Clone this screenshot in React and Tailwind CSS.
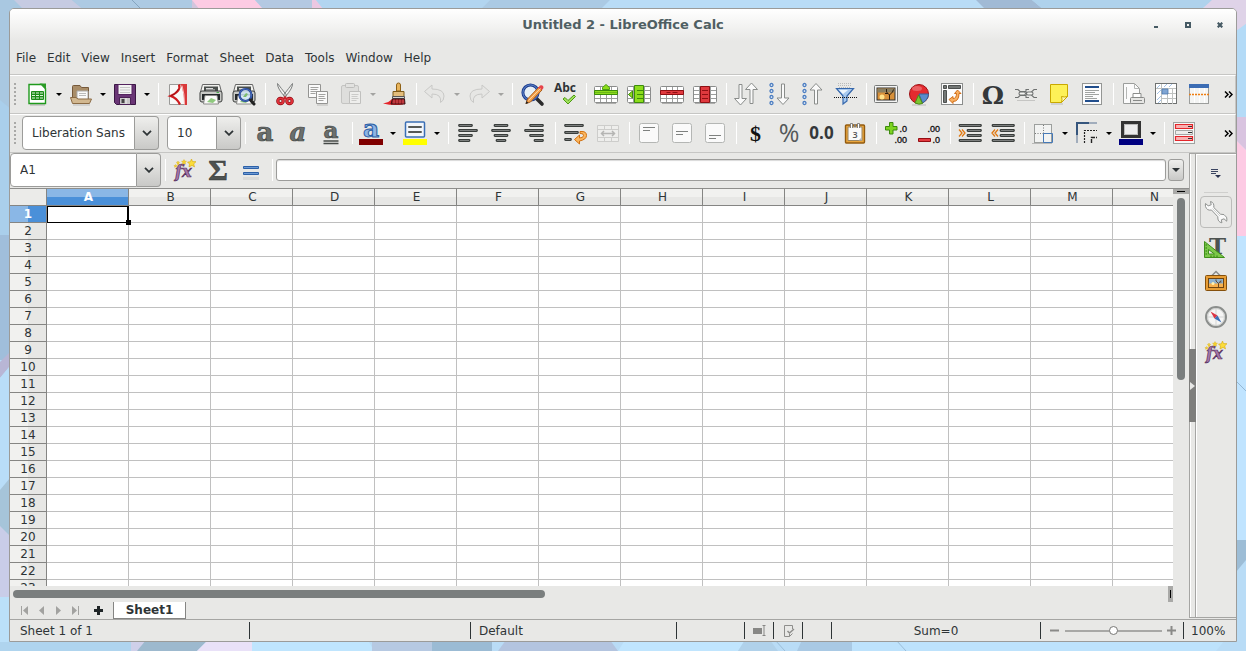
import React from "react";

const MENUS = ["File", "Edit", "View", "Insert", "Format", "Sheet", "Data", "Tools", "Window", "Help"];
const COLUMNS = "ABCDEFGHIJKLMN".split("");
const ROWS = Array.from({ length: 23 }, (_, i) => i + 1);

/* ---------- Desktop ---------- */

function Wallpaper() {
  return (
    <svg className="absolute inset-0 h-full w-full" viewBox="0 0 1246 651" preserveAspectRatio="none" aria-hidden="true">
      <rect width="1246" height="651" fill="#b9dcf6" />
      <path d="M0 0H200V240H0z" fill="#a9c8e1" />
      <path d="M0 100L12 110V240H0z" fill="#aacfeb" />
      <path d="M14 0H72L84 10H24z" fill="#c6cbe2" />
      <path d="M72 0H192V10H84z" fill="#adcae3" />
      <path d="M132 0L142 10" stroke="#86a5c0" />
      <path d="M192 0H255L264 10H192z" fill="#fccbe3" />
      <path d="M192 0L200 10H192z" fill="#d3c5dd" />
      <path d="M255 0H312V10H264z" fill="#b4c9e2" />
      <path d="M312 0H316L324 10H312z" fill="#ecc8e2" />
      <path d="M316 0H490L480 10H324z" fill="#b2d5f0" />
      <path d="M490 0H610L600 10H480z" fill="#abcae4" />
      <path d="M976 0H1032L1044 10H986z" fill="#a1bad5" />
      <path d="M1032 0H1214L1200 10H1044z" fill="#afd2ec" />
      <path d="M1212 0H1246V24L1237 31L1202 9z" fill="#dfd3e8" />
      <path d="M1246 24V117H1236V31z" fill="#b4dbf7" />
      <path d="M1236 117H1246V150L1236 140z" fill="#d9c4e0" />
      <path d="M1236 140L1246 150V236H1236z" fill="#fdcbe4" />
      <path d="M1236 236H1246V540H1236z" fill="#c0e4ff" />
      <path d="M1236 381L1246 391" stroke="#94b7d4" />
      <path d="M1236 540H1246V560L1236 572z" fill="#9dbdd6" />
      <path d="M0 235H10V360H0z" fill="#a0bedb" />
      <path d="M0 362L10 352V366L0 378z" fill="#b8b6d5" />
      <path d="M0 378L10 366V478L0 490z" fill="#b9ddf8" />
      <path d="M0 490L10 478V540H0z" fill="#a6c4d9" />
      <path d="M0 526L10 536V597H0z" fill="#c9cde8" />
      <path d="M0 597H10V651H0z" fill="#bbe0f9" />
      <path d="M0 642H131V651H0z" fill="#afd4ee" />
      <path d="M131 640H150L138 651H131z" fill="#cfd0ea" />
      <path d="M146 640H208L197 651H137z" fill="#9db9ce" />
      <path d="M208 640H252V651H197z" fill="#e9e1f8" />
      <path d="M252 640H368L374 651H252z" fill="#bfe5fe" />
      <path d="M372 640H432V651H372z" fill="#b6c9e2" />
      <path d="M432 640H492V651H432z" fill="#9bbbd4" />
      <path d="M506 640H610L618 651H498z" fill="#b3c4df" />
      <path d="M625 640H745L738 651H618z" fill="#c0e5fe" />
      <path d="M745 640H770L778 651H738z" fill="#b0d1ea" />
      <path d="M802 640H852V651H797z" fill="#a9c9e4" />
      <path d="M852 640H1225L1216 651H852z" fill="#bde2fc" />
      <path d="M896 640L906 651M775 640L785 651" stroke="#9bbdd8" />
    </svg>
  );
}

/* ---------- Icon helpers ---------- */

function Svg({ children, size = 24 }) {
  return (
    <svg width={size} height={size} viewBox="0 0 24 24" fill="none" aria-hidden="true" className="block shrink-0 overflow-visible">
      {children}
    </svg>
  );
}

const SERIF = '"DejaVu Serif", serif';
const TIMES = '"Liberation Serif", serif';
const OPEN = '"Open Sans", sans-serif';
const SANS = '"Liberation Sans", sans-serif';

/* ---------- Standard toolbar icons ---------- */

const NewIcon = () => (
  <Svg>
    <path d="M4 2.5h13l3.5 4V21.5H4z" fill="#fff" stroke="#1f9a1c" strokeWidth="1.400" />
    <path d="M14.500 1.500h6.500v6.500z" fill="#2b9b26" />
    <rect x="6" y="9" width="13" height="9" rx="1" fill="#1d8c1a" />
    <path d="M7 10.5h3v1H7zm4 0h3v1h-3zm4 0h3v1h-3zM7 13h3v1H7zm4 0h3v1h-3zm4 0h3v1h-3zM7 15.5h3v1H7zm4 0h3v1h-3zm4 0h3v1h-3z" fill="#dff6dc" />
    <path d="M5 23h15" stroke="#000" strokeOpacity=".25" />
  </Svg>
);
const OpenIcon = () => (
  <Svg>
    <path d="M3.5 19V4.5Q3.5 3.5 4.5 3.5H11l1.5 2H19.5V19z" fill="#a98d68" stroke="#76593a" />
    <path d="M8 9h11v9H8z" fill="#fafafa" stroke="#aaa" />
    <path d="M10 11.5h7M10 13.5h7" stroke="#bbb" />
    <path d="M1.5 15.5H7l2 1.5h13.5l-2 4.5h-17z" fill="#d2b890" stroke="#8b6b45" />
    <path d="M4 23h17" stroke="#000" strokeOpacity=".2" />
  </Svg>
);
const SaveIcon = () => (
  <Svg>
    <path d="M1.5 2.5h21v20h-19l-2-2z" fill="#6a3676" stroke="#3b1744" />
    <path d="M5 2.5h14v10H5z" fill="#f3f3f3" stroke="#54235f" />
    <path d="M7 5.5h10M7 8h10M7 10.5h10" stroke="#c7c7c7" />
    <path d="M6.5 15.5h11v7h-11z" fill="#c9c6c8" stroke="#4b2155" />
    <path d="M8.5 17h3v4h-3z" fill="#444" />
    <path d="M13 16v6" stroke="#eee" />
  </Svg>
);
const PdfIcon = () => (
  <Svg>
    <path d="M3.5 2.5h17v20h-17z" fill="#f8f8f7" stroke="#9a9a98" />
    <path d="M14.500 2H21v21h-2.500Q18 9 14.500 2z" fill="#d9393a" />
    <path d="M13 2.500Q15.500 9 4.500 14Q11 16 14 22.500" stroke="#cf1c1f" strokeWidth="2.200" />
    <path d="M12.500 7Q10 12 5 14" stroke="#9c0f12" strokeWidth="1" />
    <path d="M16 3.500q2.500 8 2.500 19" stroke="#f8b9b9" strokeWidth="1" />
  </Svg>
);
const PrinterBody = () => (
  <>
    <path d="M3.500 2.500h17l2 7.500H1.500z" fill="#f1f1ee" stroke="#666" />
    <path d="M5 4.500h14v4.500H5z" fill="#4a4f4d" />
    <path d="M7 6.500h7M7 8h9" stroke="#dcdcdc" />
    <rect x="1" y="9" width="22" height="11" rx="2" fill="#c9cac7" stroke="#3a3d3c" />
    <path d="M3 12h18v6H3z" fill="#24282a" />
    <path d="M6 13.500h12l1.500 8.500h-15z" fill="#fbfbfa" stroke="#8a8a88" />
    <path d="M8 20l4-4 5 2-3 3z" fill="#8fc97e" />
    <path d="M17.500 10.500h2.500" stroke="#4caf50" />
  </>
);
const PrintIcon = () => (<Svg><PrinterBody /></Svg>);
const PreviewIcon = () => (
  <Svg>
    <PrinterBody />
    <circle cx="13.5" cy="13" r="6" fill="#cfe4f5" fillOpacity=".85" stroke="#1f3f93" strokeWidth="2.200" />
    <circle cx="13.5" cy="13" r="6" stroke="#5a83cf" strokeWidth=".7" />
    <path d="M11 15l3-4 2 1-2 3z" fill="#7bbd6f" />
    <path d="M18.500 18l3.500 4" stroke="#222" strokeWidth="3" strokeLinecap="round" />
  </Svg>
);
const CutIcon = () => (
  <Svg>
    <path d="M4.5 1.5Q4 6 12 15L13.5 13Q8 6 4.5 1.5zM19.5 1.5Q20 6 12 15L10.5 13Q16 6 19.5 1.5z" fill="#f1f1f0" stroke="#7c7f7e" />
    <circle cx="7.5" cy="19" r="2.700" stroke="#8f0a12" strokeWidth="3.200" />
    <circle cx="7.5" cy="19" r="2.700" stroke="#e0323a" strokeWidth="1.800" />
    <circle cx="16.5" cy="19" r="2.700" stroke="#8f0a12" strokeWidth="3.200" />
    <circle cx="16.5" cy="19" r="2.700" stroke="#e0323a" strokeWidth="1.800" />
    <path d="M10.500 14.5h3v3h-3z" fill="#cf2029" />
  </Svg>
);
const CopyIcon = () => (
  <Svg>
    <path d="M2.5 2.5h12v13h-12z" fill="#fafafa" stroke="#949492" />
    <path d="M4.5 5.5h8M4.5 7.5h7M4.5 9.5h8M4.5 11.5h5" stroke="#a2a2a0" />
    <path d="M10.5 9.5h11v12h-11z" fill="#fafafa" stroke="#949492" />
    <path d="M12.5 12.5h7M12.5 14.5h6M12.5 16.5h7M12.5 18.5h5" stroke="#a2a2a0" />
    <path d="M11 23h11" stroke="#000" strokeOpacity=".2" />
  </Svg>
);
const PasteIcon = () => (
  <Svg>
    <rect x="2.5" y="3.5" width="17" height="18" rx="1.5" fill="#dededc" stroke="#c4c4c2" />
    <rect x="6.5" y="1.5" width="9" height="4" rx="1" fill="#e2e2e0" stroke="#bdbdbb" />
    <path d="M10.5 9.5h11v12h-11z" fill="#eeeeec" stroke="#c0c0be" />
    <path d="M12.5 12.5h7M12.5 14.5h6M12.5 16.5h7M12.5 18.5h5" stroke="#cbcbc9" />
  </Svg>
);
const BrushIcon = () => (
  <Svg>
    <path d="M0 21.500Q6 20.500 9 17L20 18V22.5Q10 24 0 21.500z" fill="#e5242b" />
    <path d="M13.5 9V3Q13.5 1 15.5 1Q17.5 1 17.5 3V9z" fill="#e8b45c" stroke="#8f6116" />
    <path d="M10 9.5h11v5H10z" fill="#e3bd7c" stroke="#7d5a1a" />
    <path d="M9.5 14.5h12v2h-12z" fill="#d6d6d4" stroke="#555" />
    <path d="M9.5 17h12l.5 5H8z" fill="#9c2025" stroke="#3b1113" />
    <path d="M11 17.500v4M14 17.500v4M17 17.500v4M20 17.500v4" stroke="#e05358" />
  </Svg>
);
const Curve = () => (
  <path d="M1.5 9.5L9 3V7Q21 7 21 14Q21 19 17.5 20.5Q19 12 9 12V16z" fill="#e6e6e4" stroke="#c9c9c7" />
);
const UndoIcon = () => (<Svg><Curve /></Svg>);
const RedoIcon = () => (<Svg><g transform="translate(24 0) scale(-1 1)"><Curve /></g></Svg>);
const FindIcon = () => (
  <Svg>
    <path d="M16 16l6 6" stroke="#2b2b2b" strokeWidth="3.600" strokeLinecap="round" />
    <circle cx="10.500" cy="10.500" r="7.600" fill="#e6eff6" stroke="#1f3f8f" strokeWidth="3" />
    <circle cx="10.500" cy="10.500" r="7.600" stroke="#6289cf" strokeWidth="1" />
    <path d="M6 21.5l1.5-4.5L19 5l3 3L10.5 20z" fill="#f3a04a" stroke="#a35412" strokeWidth=".9" />
    <path d="M18 6l2-2.5q2-1 3.200.8T22 8z" fill="#e7444b" />
    <path d="M5.5 22l1-3 2 2z" fill="#222" />
    <path d="M8.500 18.500L20.500 6.500" stroke="#fbd3a0" />
  </Svg>
);
const SpellIcon = () => (
  <Svg>
    <text x="1" y="10" fontFamily={OPEN} fontWeight="700" fontSize="12" fill="#2f3436">Abc</text>
    <path d="M10 17l2-1.5 3 3 6-5.5 1.5 1.5L15 22z" fill="#9fe05b" stroke="#4c9a12" />
  </Svg>
);
const TableBase = () => (
  <>
    <rect x=".5" y="4.5" width="23" height="16" rx="1" fill="#fff" stroke="#8b8d8c" />
    <path d="M1 8.5h22M1 12.5h22M1 16.5h22M6.5 5v15M12.5 5v15M17.5 5v15" stroke="#9b9d9c" />
    <path d="M2 21.500h20" stroke="#000" strokeOpacity=".25" />
  </>
);
const RowInsertIcon = () => (
  <Svg>
    <TableBase />
    <path d="M.5 8.5h23v4H.5z" fill="#8ddd1c" stroke="#3c8c0a" />
    <path d="M12 2.500L8.500 5.500V7.500H15.500V5.500z" fill="#8ddd1c" stroke="#4ca00f" />
    <path d="M1 10.500h22" stroke="#6cb81a" />
  </Svg>
);
const ColInsertIcon = () => (
  <Svg>
    <TableBase />
    <path d="M7.5 3.5h9v17h-9z" fill="#8ddd1c" stroke="#3c8c0a" />
    <path d="M10 8.5h6M10 12.5h6M10 16.5h6" stroke="#3c8c0a" />
    <path d="M1.5 12.5l4-3.500v7z" fill="#8ddd1c" stroke="#3c8c0a" />
  </Svg>
);
const RowDeleteIcon = () => (
  <Svg>
    <TableBase />
    <path d="M.5 8.5h23v4H.5z" fill="#e0393e" stroke="#8f0f13" />
    <path d="M6.5 10.5h4M12.5 10.5h5" stroke="#8f0f13" />
  </Svg>
);
const ColDeleteIcon = () => (
  <Svg>
    <TableBase />
    <path d="M7.5 4.5h9v16h-9z" fill="#e0393e" stroke="#8f0f13" />
    <path d="M9 8.5h6M9 12.5h6M9 16.5h6" stroke="#8f0f13" />
  </Svg>
);
const DOWN = "M-1.5 -10V4H-6L0 10.500L6 4H1.5V-10z";
const UP = "M-1.5 10V-4H-6L0 -10.500L6 -4H1.5V10z";
const SortIcon = () => (
  <Svg>
    <path transform="translate(6.500 12.500)" d={DOWN} fill="#fafafa" stroke="#8a8d8b" />
    <path transform="translate(17.500 11.500)" d={UP} fill="#fafafa" stroke="#8a8d8b" />
  </Svg>
);
const Dots = () => (
  <g fill="#fff" stroke="#4a7cc0" strokeWidth="1.300">
    <circle cx="4.500" cy="3" r="1.500" /><circle cx="4.500" cy="9" r="1.500" />
    <circle cx="4.500" cy="15" r="1.500" /><circle cx="4.500" cy="21" r="1.500" />
  </g>
);
const SortAscIcon = () => (<Svg><Dots /><path transform="translate(16 12)" d={DOWN} fill="#fafafa" stroke="#8a8d8b" /></Svg>);
const SortDescIcon = () => (<Svg><Dots /><path transform="translate(16 12)" d={UP} fill="#fafafa" stroke="#8a8d8b" /></Svg>);
const FilterIcon = () => (
  <Svg>
    <path d="M5 1.5h14M5 3.5h14M6 5.5h12" stroke="#b9bbba" strokeDasharray="1 1" />
    <path d="M3.5 6.5h17L14 14v5l-4 3V14z" fill="#a8c9ee" stroke="#3668ad" strokeWidth="1.200" />
    <path d="M6 8h9L10 12z" fill="#eef6fd" />
    <path d="M1 15.5h23" stroke="#111" strokeDasharray="1 1" />
  </Svg>
);
const ImageIcon = () => (
  <Svg>
    <rect x=".5" y="3.5" width="23" height="17" rx="1" fill="#f4f4f3" stroke="#777a79" />
    <rect x="3" y="6" width="18" height="12" fill="#d8913a" stroke="#2f2f2f" />
    <path d="M3.5 6.5h17v4h-17z" fill="#8a8062" />
    <circle cx="8" cy="15" r="2.5" fill="#ffe28a" />
    <path d="M15.500 18V13l-3-3V7M15.500 13l3-3 1-2.500M14 11.500h-3" stroke="#2c1d0e" />
  </Svg>
);
const ChartIcon = () => (
  <Svg>
    <circle cx="12" cy="12" r="9.5" fill="#e42b2f" stroke="#9e1014" />
    <path d="M12 12h9.5Q21 18 15.5 21z" fill="#5a8ccb" stroke="#35659f" />
    <path d="M11.500 13l4 8.5Q12 23 8 21z" fill="#7cc432" stroke="#4d8f18" />
    <ellipse cx="10" cy="6.5" rx="5" ry="2.5" fill="#fff" fillOpacity=".25" />
    <path d="M5 23h14" stroke="#000" strokeOpacity=".2" />
  </Svg>
);
const PivotIcon = () => (
  <Svg>
    <rect x="1.5" y="1.5" width="21" height="21" fill="#fdfdfd" stroke="#8b8d8c" />
    <path d="M3.5 3.5h3v3h-3zM8.5 3.5h12v3h-12zM3.5 8.5h3v12h-3z" fill="#747876" stroke="#4d504f" />
    <path d="M9 17.5l4-3v2q3.500 0 3.500-5h-2l3-3.500 3.500 3.500h-2q0 8-6 8v2z" fill="#f8b061" stroke="#ce640b" strokeWidth=".9" />
  </Svg>
);
const OmegaIcon = () => (
  <Svg>
    <text x="12" y="21.500" textAnchor="middle" fontFamily={SERIF} fontWeight="700" fontSize="25" fill="#34383a">Ω</text>
  </Svg>
);
const LinkIcon = () => (
  <Svg>
    <g stroke="#6f7271" strokeWidth="1.100" fill="#f4f4f2">
      <path d="M1 7.500h3l2 2h6v-2h3M1 15.500h3l2-2h6v2h3M23 7.500h-3l-3 3h-5M23 15.500h-3l-3-3h-5" fill="none" />
      <rect x="5" y="10" width="6.500" height="3" rx="1.500" />
      <rect x="12.500" y="10" width="6.500" height="3" rx="1.500" />
    </g>
    <path d="M3 18.5h18" stroke="#000" strokeOpacity=".15" />
  </Svg>
);
const NoteIcon = () => (
  <Svg>
    <path d="M3.500 2.5h17v12l-6 6h-11z" fill="#fdf157" stroke="#c9a800" />
    <path d="M20.500 14.5l-6 6q1-3 0-6 3 1 6 0z" fill="#fff9b5" stroke="#c9a800" />
    <path d="M4 22h12" stroke="#000" strokeOpacity=".2" />
  </Svg>
);
const HeaderIcon = () => (
  <Svg>
    <rect x="2.5" y="1.5" width="19" height="21" fill="#fcfcfc" stroke="#949694" />
    <path d="M5 5h14M5 19h14" stroke="#214e8c" strokeWidth="2" />
    <path d="M5 8.5h14M5 10.5h10M5 12.5h14M5 14.5h8M5 16.5h12" stroke="#a0a3a1" />
  </Svg>
);
const PrintAreaIcon = () => (
  <Svg>
    <path d="M2.5 1.5h11l5 5v15h-16z" fill="#fbfbfb" stroke="#9b9d9b" />
    <path d="M13.5 1.5v5h5M5.5 5v12" stroke="#b5b7b5" />
    <path d="M12 11.5h8v5h-8z" fill="#fff" stroke="#8b8d8b" />
    <rect x="9.5" y="15.5" width="14" height="6" rx="1" fill="#e6e6e4" stroke="#888a88" />
    <path d="M12 18.5h9" stroke="#888a88" />
  </Svg>
);
const FreezeIcon = () => (
  <Svg>
    <rect x="1.5" y="1.5" width="21" height="20" fill="#fff" stroke="#6f7271" />
    <path d="M3 6l3-3M3 12l4-4M3 18l4-4M10 5l3-3M15 5l3-3M4 21l3-3" stroke="#a4c3e6" />
    <path d="M7.5 2v20M13.5 6v16M18.5 6v16M2 6.5h20M8 11.5h14M8 16.5h14" stroke="#bfc2c0" />
    <path d="M8 7h6v5H8z" fill="#7fa5d3" stroke="#4f79ad" strokeWidth=".8" />
  </Svg>
);
const SplitIcon = () => (
  <Svg>
    <rect x="2.5" y="2.5" width="19" height="19" fill="#f4f5f4" stroke="#9c9e9c" />
    <path d="M2 2h20v4H2z" fill="#3c6db4" />
    <path d="M7.5 6v15M12.5 6v15M17.5 6v15" stroke="#fff" />
    <path d="M2 12.5h20" stroke="#ef7f12" strokeWidth="1.400" strokeDasharray="2 1" />
  </Svg>
);

/* ---------- Formatting toolbar icons ---------- */

const Letter = ({ italic, under }) => (
  <Svg>
    <text x="12" y={under ? 17 : 20} textAnchor="middle" fontFamily={SERIF} fontWeight="700" fontStyle={italic ? "italic" : "normal"}
      fontSize={under ? 23 : 26} fill="#6b6f6d" stroke="#414543" strokeWidth=".7">a</text>
    {under && <path d="M4.500 20h15M4.500 22.5h15" stroke="#454947" strokeWidth="1.400" />}
  </Svg>
);
const FontColorIcon = () => (
  <Svg>
    <text x="12" y="15.500" textAnchor="middle" fontFamily={SERIF} fontWeight="700" fontSize="25" fill="#8db3e4" stroke="#2b5ea5" strokeWidth="1">a</text>
    <path d="M0 18h24v6H0z" fill="#800000" />
  </Svg>
);
const HighlightIcon = () => (
  <Svg>
    <rect x="2.500" y="1" width="19" height="15" rx="1" fill="#f2f6fb" stroke="#3a6fb5" strokeWidth="1.5" />
    <path d="M6 6h12M6 11h12" stroke="#555957" strokeWidth="2" strokeLinecap="round" />
    <path d="M0 18h24v6H0z" fill="#ffff00" />
  </Svg>
);
const Lines = ({ d }) => (
  <>
    <path d={d} stroke="#3a3e3c" strokeWidth="2.800" strokeLinecap="round" />
    <path d={d} stroke="#8d918f" strokeWidth=".8" />
  </>
);
const AlignIcon = ({ mode }) => {
  const paths = {
    left: "M3.5 4.5h12M3.5 9.5h17M3.5 14.5h12M3.5 19.5h9.5",
    center: "M6 4.5h12M3.5 9.5h17M6 14.5h12M8 19.5h8",
    right: "M8.5 4.5h12M3.5 9.5h17M8.5 14.5h12M13 19.5h7.5",
  };
  return (<Svg><Lines d={paths[mode]} /></Svg>);
};
const WrapIcon = () => (
  <Svg>
    <Lines d="M2.5 4.5h17M2.5 11.5h12M2.5 18.5h5" />
    <path d="M17 10.500h2q4.500 0 4.500 4t-7 5.500v3l-5-4.5 5-4.5v3q4 0 4-2.500t-3.500-2z" fill="#fbb65e" stroke="#d1700f" />
  </Svg>
);
const MergeIcon = () => (
  <Svg>
    <path d="M1.5 4.5h21v16h-21zM1.5 8.5h21M1.5 16.5h21M8.5 4.5v4M15.5 4.5v4M8.5 16.5v4M15.5 16.5v4" stroke="#cdcdcb" fill="#eeeeec" />
    <path d="M6 12.5h12M8 10l-2.5 2.5L8 15M16 10l2.5 2.5L16 15" stroke="#b5b5b3" strokeWidth="1.5" />
  </Svg>
);
const VAlignIcon = ({ mode }) => {
  const paths = { top: "M6 6.5h12M6 9.5h7", middle: "M6 10.5h12M6 13.5h7", bottom: "M6 14.5h12M6 17.5h7" };
  return (
    <Svg>
      <rect x="2.5" y="2.5" width="19" height="19" rx="2" fill="#fafafa" stroke="#b4b6b4" />
      <path d={paths[mode]} stroke="#7e817f" />
    </Svg>
  );
};
const DollarIcon = () => (
  <Svg><text x="11.500" y="19.500" textAnchor="middle" fontFamily={TIMES} fontWeight="700" fontSize="22" fill="#111">$</text></Svg>
);
const PercentIcon = () => (
  <Svg><text x="12" y="21" textAnchor="middle" fontFamily={OPEN} fontSize="25" fill="#55595a">%</text></Svg>
);
const NumberIcon = () => (
  <Svg><text x="11.500" y="18" textAnchor="middle" fontFamily={OPEN} fontWeight="700" fontSize="17" fill="#34383a">0.0</text></Svg>
);
const DateIcon = () => (
  <Svg>
    <rect x="2.5" y="4" width="19" height="18" rx="1" fill="#e9a53c" stroke="#925b0f" strokeWidth="1.400" />
    <path d="M5 6h14v13.5H5z" fill="#fafafa" stroke="#9a8560" />
    <path d="M7.5 7V2.5h2V7M14.5 7V2.5h2V7M11.5 6V3.5h1V6" fill="#fff" stroke="#777" strokeWidth=".9" />
    <text x="12" y="16.500" textAnchor="middle" fontFamily={OPEN} fontWeight="600" fontSize="9" fill="#555">3</text>
    <path d="M19 16v3.5h-3.5z" fill="#b6b6b4" />
  </Svg>
);
const Decimals = ({ top, bottom }) => (
  <>
    <text x="23" y="11" textAnchor="end" fontFamily={SANS} fontSize="9" fill="#111" stroke="#111" strokeWidth=".3">{top}</text>
    <text x="23" y="22" textAnchor="end" fontFamily={SANS} fontSize="9" fill="#111" stroke="#111" strokeWidth=".3">{bottom}</text>
  </>
);
const DecimalAddIcon = () => (
  <Svg>
    <path d="M5.500 1.500H9v4H13V9H9v4H5.500V9H1.500V5.500h4z" fill="#7ed321" stroke="#3b8a0b" />
    <Decimals top=".0" bottom=".00" />
  </Svg>
);
const DecimalDeleteIcon = () => (
  <Svg>
    <path d="M1.5 17.500h12v3h-12z" fill="#e23a3f" stroke="#950d12" />
    <Decimals top=".00" bottom=".0" />
  </Svg>
);
const IndentIcon = ({ out }) => (
  <Svg>
    <Lines d="M2 4.5h20.500M10 9.5h12.500M10 14.5h12.500M2 19.5h20.500" />
    {out
      ? <path d="M7 8.500l-3 3.500 3 3.500M4 8.5L1 12l3 3.5" stroke="#e07a14" strokeWidth="1.300" />
      : <path d="M1 8.500l3 3.500-3 3.500M4 8.5L7 12l-3 3.5" stroke="#e07a14" strokeWidth="1.300" />}
  </Svg>
);
const BorderIcon = () => (
  <Svg>
    <rect x="3.5" y="3.5" width="17" height="18" fill="#f2f3f2" stroke="#9c9f9d" />
    <path d="M12.5 4v17M4 12.5h17" stroke="#777" strokeDasharray="1 1.5" />
    <path d="M12.5 12.5h9v9h-9z" stroke="#4579b7" />
    <path d="M1 22.5h20" stroke="#000" strokeOpacity=".2" />
  </Svg>
);
const BorderStyleIcon = () => (
  <Svg>
    <path d="M2 14V2h12" stroke="#36567d" strokeWidth="2" />
    <path d="M2 14v8M14 2h8" stroke="#36567d" strokeOpacity=".4" strokeWidth="2" />
    <path d="M9.5 22V9.5H22" stroke="#222" strokeWidth="1.200" strokeDasharray="2 1" />
    <path d="M16.500 22v-5.500h5.500" stroke="#222" strokeWidth="1.400" strokeDasharray="4 1" />
  </Svg>
);
const BorderColorIcon = () => (
  <Svg>
    <rect x="3.5" y="1.5" width="17" height="14" fill="#ececec" stroke="#333" strokeWidth="3" />
    <path d="M5.5 3.500h13v10h-13z" stroke="#999" strokeWidth=".6" />
    <path d="M0 18h24v6H0z" fill="#000080" />
  </Svg>
);
const ConditionalIcon = () => (
  <Svg>
    <rect x="1.5" y="1.5" width="21" height="21" fill="#f7f7f6" stroke="#a0a2a0" />
    <path d="M3.5 3.5h17v4h-17zM3.5 15.5h17v4h-17z" fill="#f9b1b1" stroke="#e3262b" strokeWidth="1.200" />
    <path d="M3.5 9.5h17v4h-17z" fill="#ededeb" stroke="#a5a7a5" />
    <path d="M16 5.500h4M16 11.5h4M16 17.500h4" stroke="#333" />
  </Svg>
);

/* ---------- Formula bar and sidebar icons ---------- */

const FxIcon = () => (
  <Svg>
    <text x="2" y="19" fontFamily={SERIF} fontStyle="italic" fontWeight="700" fontSize="16" fill="#a678aa" stroke="#59305f" strokeWidth=".7">fx</text>
    <path d="M18.5 1l1 2.5 3.500.2-2.300 2.200.8 3-2.500-1.500L16 9l.5-3L14.500 4l2.800-.2z" fill="#fbdc3a" stroke="#d5a80c" strokeWidth=".6" />
    <path d="M11 1.5l.7 1.5 1.800.3-1.300 1.200.3 1.700-1.500-.8-1.500.8.3-1.700L8.500 3.300l1.800-.3zM5 3l.5 1.200 1.200.2-.9.9.2 1.200-1-.6-1 .6.2-1.200-.9-.9 1.200-.2zM2.500 6.500l.5 1 1 .1-.7.7.2 1-1-.5-1 .5.2-1-.7-.7 1-.1z" fill="#f6d22c" stroke="#d9ae14" strokeWidth=".4" />
  </Svg>
);
const SigmaIcon = () => (
  <Svg>
    <text x="12" y="22" textAnchor="middle" fontFamily={TIMES} fontWeight="700" fontSize="30" fill="#4d5150" stroke="#2e3231" strokeWidth=".5">Σ</text>
  </Svg>
);
const EqualsIcon = () => (
  <Svg>
    <path d="M4.500 8.500h15v2h-15zM4.500 14.500h15v2h-15z" fill="#6d9ad4" stroke="#2d61a8" />
    <path d="M4 20.500h16" stroke="#000" strokeOpacity=".06" strokeWidth="3" />
  </Svg>
);
const SidebarMenuIcon = () => (
  <svg width="10" height="10" viewBox="0 0 10 10" fill="none" aria-hidden="true">
    <path d="M0 1.500h7M0 3.500h7M0 5.500h5" stroke="#3b4561" />
    <path d="M4 7h6L7 10z" fill="#2a3350" />
  </svg>
);
const WrenchIcon = () => (
  <Svg>
    <path d="M6.500 1.500Q10.500 2.500 9.800 7.500L16.500 14.200q4-.7 6 3 .7 2 .2 4L20 18.800l-2.700 1 .6 3q-4.500-.8-4.100-6.100L7.500 10q-4.500 1-6-3.500Q1.200 5 1.500 3.500L4.200 5.800l3-1z" fill="#fafafa" stroke="#8f9290" />
    <path d="M8.5 8.500l7.500 7.500" stroke="#cfd1cf" />
  </Svg>
);
const StylesIcon = () => (
  <Svg>
    <text x="13.5" y="18.500" textAnchor="middle" fontFamily={SERIF} fontWeight="700" fontSize="23" fill="#4d5351">T</text>
    <path d="M.500 6.500V22.500H20.500z" fill="#7cc84a" stroke="#3f8f1a" />
    <path d="M4.500 14.500v4.500h6z" fill="#e7e7e5" stroke="#3f8f1a" />
    <path d="M1.500 10H3M1.500 13H3M1.500 16H3M1.500 19H3M7 22v-1.500M10 22v-1.500M13 22v-1.500" stroke="#2f7a10" />
  </Svg>
);
const GalleryIcon = () => (
  <Svg>
    <path d="M8 5.500l4-4 4 4" stroke="#8a8d8b" strokeWidth="1.500" />
    <rect x="1.500" y="5.500" width="21" height="15" rx="1" fill="#e79d35" stroke="#85500c" />
    <rect x="4.500" y="8.500" width="15" height="9" fill="#8fb2cf" stroke="#6f4510" />
    <path d="M5 13.500h14v3.500H5z" fill="#f7b04c" />
    <circle cx="9" cy="13.500" r="1.500" fill="#fff2b0" />
    <path d="M14.500 17v-3.500l-2.500-2.500M14.500 13.500l2.500-3M12 11V9.500M17.500 12h-1.500" stroke="#5a3c1d" strokeWidth=".9" />
  </Svg>
);
const NavigatorIcon = () => (
  <Svg>
    <circle cx="12" cy="12" r="10" fill="#f5f5f4" stroke="#8b8e8c" strokeWidth="2" />
    <circle cx="12" cy="12" r="8.500" stroke="#c9cbc9" />
    <path d="M12 4v16M4 12h16" stroke="#c5c7c5" strokeWidth=".7" />
    <path d="M6.5 6.500l7 4-3 3z" fill="#dc3545" />
    <path d="M17.5 17.500l-7-4 3-3z" fill="#3c70b8" />
  </Svg>
);

/* ---------- Toolbar pieces ---------- */

function Tool({ label, children }) {
  return (
    <button type="button" aria-label={label} title={label} className="flex h-6 w-6 shrink-0 items-center justify-center">
      {children}
    </button>
  );
}

function DropTool({ label, disabled, children }) {
  return (
    <div className="flex shrink-0 items-center gap-1.5">
      <Tool label={label}>{children}</Tool>
      <button type="button" aria-label={`${label} options`} className={disabled ? "flex h-6 w-2 items-center justify-center text-[#a3a3a1]" : "flex h-6 w-2 items-center justify-center text-black"}>
        <svg width="6" height="3" viewBox="0 0 6 3" fill="currentColor" aria-hidden="true" className="shrink-0"><path d="M0 0h6L3 3z" /></svg>
      </button>
    </div>
  );
}

const Group = ({ children }) => <div className="flex shrink-0 items-center gap-[9px]">{children}</div>;
const DropGroup = ({ children }) => <div className="flex shrink-0 items-center gap-1.5">{children}</div>;
const Divider = ({ className = "ml-[9px] mr-[7px]" }) => (
  <div role="separator" className={`h-[22px] w-px shrink-0 bg-white ${className}`} />
);

function Grip() {
  return <div className="ml-1 mr-[9px] h-[22px] w-0 shrink-0 border-l-2 border-dotted border-[#a9a9a7]" />;
}

function Toolbar({ label, children }) {
  return (
    <div role="toolbar" aria-label={label} className="flex h-[39px] shrink-0 items-center overflow-hidden border-y border-t-white border-r border-b-[#c6c6c4] border-r-[#c6c6c4] pb-px">
      {children}
      <button type="button" aria-label="More tools" className="ml-auto mr-px flex h-6 w-3 shrink-0 items-center justify-center">
        <svg width="9" height="7" viewBox="0 0 9 7" fill="none" stroke="#000" strokeWidth="1.500" aria-hidden="true"><path d="M1 .5l3 3-3 3M5 .5l3 3-3 3" /></svg>
      </button>
    </div>
  );
}

function Combo({ label, value, inputClass }) {
  return (
    <div className="flex h-[34px] shrink-0">
      <input aria-label={label} defaultValue={value} className={`rounded-l border border-[#9c9c9a] bg-white text-xs text-[#2e3436] outline-none ${inputClass}`} />
      <button type="button" aria-label={`${label} list`} className="flex w-6 items-center justify-center rounded-r border border-l-0 border-[#9c9c9a] bg-linear-to-b from-[#efefed] to-[#c9c9c7]">
        <svg width="10" height="6" viewBox="0 0 10 6" fill="none" stroke="#2e3436" strokeWidth="1.800" aria-hidden="true"><path d="M1 .8L5 4.800 9 .8" /></svg>
      </button>
    </div>
  );
}

/* ---------- Window sections ---------- */

function TitleBar() {
  return (
    <header className="grid h-[31px] shrink-0 grid-cols-[1fr_auto_1fr] items-center">
      <span />
      <h1 className="text-[13px] font-bold text-[#4f5f63]">Untitled 2 - LibreOffice Calc</h1>
      <div className="flex items-center justify-end gap-2 pr-1 text-[#465a64]">
        <button type="button" aria-label="Minimize" className="flex h-6 w-6 items-center justify-center">
          <svg width="6" height="6" viewBox="0 0 6 6" fill="currentColor" aria-hidden="true"><path d="M1 4h4v2H1z" /></svg>
        </button>
        <button type="button" aria-label="Maximize" className="flex h-6 w-6 items-center justify-center">
          <svg width="6" height="6" viewBox="0 0 6 6" aria-hidden="true"><path d="M1 1h4v4H1z" fill="none" stroke="currentColor" strokeWidth="2" /></svg>
        </button>
        <button type="button" aria-label="Close" className="flex h-6 w-6 items-center justify-center">
          <svg width="6" height="6" viewBox="0 0 6 6" aria-hidden="true"><path d="M.7.7l4.600 4.600M5.300.7L.7 5.300" stroke="currentColor" strokeWidth="2.200" /></svg>
        </button>
      </div>
    </header>
  );
}

function MenuBar() {
  return (
    <nav aria-label="Main menu" className="flex h-[35px] shrink-0 items-center gap-[11px] border-b border-[#c6c6c4] pt-0.5 pl-1.5">
      {MENUS.map((name) => (
        <button key={name} type="button">{name}</button>
      ))}
    </nav>
  );
}

function StandardToolbar() {
  return (
    <Toolbar label="Standard">
      <Grip />
      <DropGroup>
        <DropTool label="New"><NewIcon /></DropTool>
        <DropTool label="Open"><OpenIcon /></DropTool>
        <DropTool label="Save"><SaveIcon /></DropTool>
      </DropGroup>
      <Divider className="mx-[7px]" />
      <Group>
        <Tool label="Export as PDF"><PdfIcon /></Tool>
        <Tool label="Print"><PrintIcon /></Tool>
        <Tool label="Print preview"><PreviewIcon /></Tool>
      </Group>
      <Divider />
      <Group>
        <Tool label="Cut"><CutIcon /></Tool>
        <Tool label="Copy"><CopyIcon /></Tool>
        <DropGroup>
          <DropTool label="Paste" disabled><PasteIcon /></DropTool>
          <Tool label="Clone formatting"><BrushIcon /></Tool>
        </DropGroup>
      </Group>
      <Divider className="ml-[9px] mr-1.5" />
      <DropGroup>
        <DropTool label="Undo" disabled><UndoIcon /></DropTool>
        <DropTool label="Redo" disabled><RedoIcon /></DropTool>
      </DropGroup>
      <Divider className="mx-[7px]" />
      <Group>
        <Tool label="Find and replace"><FindIcon /></Tool>
        <Tool label="Spelling"><SpellIcon /></Tool>
      </Group>
      <Divider />
      <Group>
        <Tool label="Insert row"><RowInsertIcon /></Tool>
        <Tool label="Insert column"><ColInsertIcon /></Tool>
        <Tool label="Delete row"><RowDeleteIcon /></Tool>
        <Tool label="Delete column"><ColDeleteIcon /></Tool>
      </Group>
      <Divider />
      <Group>
        <Tool label="Sort"><SortIcon /></Tool>
        <Tool label="Sort ascending"><SortAscIcon /></Tool>
        <Tool label="Sort descending"><SortDescIcon /></Tool>
        <Tool label="AutoFilter"><FilterIcon /></Tool>
      </Group>
      <Divider />
      <Group>
        <Tool label="Image"><ImageIcon /></Tool>
        <Tool label="Chart"><ChartIcon /></Tool>
        <Tool label="Pivot table"><PivotIcon /></Tool>
      </Group>
      <Divider />
      <Group>
        <Tool label="Special character"><OmegaIcon /></Tool>
        <Tool label="Hyperlink"><LinkIcon /></Tool>
        <Tool label="Comment"><NoteIcon /></Tool>
        <Tool label="Headers and footers"><HeaderIcon /></Tool>
      </Group>
      <Divider />
      <Group>
        <Tool label="Print area"><PrintAreaIcon /></Tool>
        <Tool label="Freeze rows and columns"><FreezeIcon /></Tool>
        <Tool label="Split window"><SplitIcon /></Tool>
      </Group>
    </Toolbar>
  );
}

function FormattingToolbar() {
  return (
    <Toolbar label="Formatting">
      <Grip />
      <div className="-ml-[3px] flex shrink-0 items-center gap-2">
        <Combo label="Font name" value="Liberation Sans" inputClass="w-[113px] px-[9px]" />
        <Combo label="Font size" value="10" inputClass="w-[50px] px-[9px]" />
      </div>
      <Divider className="ml-1 mr-[7px]" />
      <Group>
        <Tool label="Bold"><Letter /></Tool>
        <Tool label="Italic"><Letter italic /></Tool>
        <Tool label="Underline"><Letter under /></Tool>
      </Group>
      <Divider className="ml-[9px] mr-1.5" />
      <DropGroup>
        <DropTool label="Font color"><FontColorIcon /></DropTool>
        <DropTool label="Highlighting"><HighlightIcon /></DropTool>
      </DropGroup>
      <Divider className="mx-[7px]" />
      <Group>
        <Tool label="Align left"><AlignIcon mode="left" /></Tool>
        <Tool label="Center"><AlignIcon mode="center" /></Tool>
        <Tool label="Align right"><AlignIcon mode="right" /></Tool>
      </Group>
      <Divider />
      <Group>
        <Tool label="Wrap text"><WrapIcon /></Tool>
        <Tool label="Merge cells"><MergeIcon /></Tool>
      </Group>
      <Divider />
      <Group>
        <Tool label="Align top"><VAlignIcon mode="top" /></Tool>
        <Tool label="Center vertically"><VAlignIcon mode="middle" /></Tool>
        <Tool label="Align bottom"><VAlignIcon mode="bottom" /></Tool>
      </Group>
      <Divider />
      <Group>
        <Tool label="Currency"><DollarIcon /></Tool>
        <Tool label="Percent"><PercentIcon /></Tool>
        <Tool label="Number"><NumberIcon /></Tool>
        <Tool label="Date"><DateIcon /></Tool>
      </Group>
      <Divider />
      <Group>
        <Tool label="Add decimal place"><DecimalAddIcon /></Tool>
        <Tool label="Delete decimal place"><DecimalDeleteIcon /></Tool>
      </Group>
      <Divider />
      <Group>
        <Tool label="Increase indent"><IndentIcon /></Tool>
        <Tool label="Decrease indent"><IndentIcon out /></Tool>
      </Group>
      <Divider className="ml-[9px] mr-1.5" />
      <DropGroup>
        <DropTool label="Borders"><BorderIcon /></DropTool>
        <DropTool label="Border style"><BorderStyleIcon /></DropTool>
        <DropTool label="Border color"><BorderColorIcon /></DropTool>
      </DropGroup>
      <Divider className="mx-[7px]" />
      <Tool label="Conditional formatting"><ConditionalIcon /></Tool>
    </Toolbar>
  );
}

function FormulaBar() {
  return (
    <div className="flex h-[35px] shrink-0 items-center pb-px">
      <Combo label="Name box" value="A1" inputClass="w-[127px] px-[9px]" />
      <Divider className="ml-1 mr-[7px]" />
      <Group>
        <Tool label="Function wizard"><FxIcon /></Tool>
        <Tool label="Sum"><SigmaIcon /></Tool>
        <Tool label="Function"><EqualsIcon /></Tool>
      </Group>
      <Divider className="ml-[9px] mr-[3px]" />
      <input aria-label="Input line" className="h-[22px] min-w-0 flex-1 rounded-[3px] border border-[#9c9c9a] bg-white px-2 shadow-[inset_0_1px_1px_#d9d9d9] outline-none" />
      <button type="button" aria-label="Expand formula bar" className="ml-0.5 mr-[5px] flex h-[22px] w-4 shrink-0 items-center justify-center rounded-[3px] border border-[#9c9c9a] bg-linear-to-b from-[#efefed] to-[#c9c9c7]">
        <svg width="8" height="4" viewBox="0 0 8 4" fill="#2e3436" aria-hidden="true" className="shrink-0"><path d="M0 0h8L4 4z" /></svg>
      </button>
    </div>
  );
}

const HEAD = "h-[18px] overflow-hidden border-r border-y border-t-[#8e8e8c] border-b-[#858583] border-r-[#858583] py-0 pr-0 pl-0.5 text-center leading-4 ";
const ROWHEAD = "h-[17px] border-r border-b border-[#858583] p-0 text-center leading-4 ";

function Sheet() {
  return (
    <div className="min-h-0 min-w-0 flex-1 overflow-hidden bg-white">
      <table className="w-[1185px] table-fixed border-separate border-spacing-0 text-xs">
        <colgroup>
          <col className="w-[37px]" />
          {COLUMNS.map((c) => <col key={c} className="w-[82px]" />)}
        </colgroup>
        <thead>
          <tr>
            <td className={HEAD + "bg-[#ebebe9]"} />
            {COLUMNS.map((c) => (
              <th key={c} scope="col" className={HEAD + (c === "A"
                ? "bg-[linear-gradient(#8ab7e6_50%,#4a90d9_50%)] font-bold text-white"
                : "bg-[linear-gradient(#f1f1ef_50%,#e7e7e5_50%)] font-normal")}>{c}</th>
            ))}
          </tr>
        </thead>
        <tbody>
          {ROWS.map((r) => (
            <tr key={r}>
              <th scope="row" className={ROWHEAD + (r === 1
                ? "bg-[linear-gradient(90deg,#8ab7e6_50%,#4a90d9_50%)] font-bold text-white"
                : "bg-[linear-gradient(90deg,#f1f1ef_50%,#e7e7e5_50%)] font-normal")}>{r}</th>
              {COLUMNS.map((c) => (
                <td key={c} className="relative h-[17px] border-r border-b border-[#c0c0c0] p-0">
                  {r === 1 && c === "A" && (
                    <>
                      <span className="absolute -right-px -bottom-px top-0 left-0 border border-r-2 border-black" />
                      <span className="absolute -right-[3px] -bottom-[3px] z-10 h-[5px] w-[5px] bg-black" />
                    </>
                  )}
                </td>
              ))}
            </tr>
          ))}
        </tbody>
      </table>
    </div>
  );
}

function VerticalScroll() {
  return (
    <div className="flex w-4 shrink-0 flex-col items-center border-t border-[#8e8e8c]">
      <div className="flex h-[5px] w-full shrink-0 items-center justify-center bg-[#a9a9a7]">
        <div className="h-px w-2 bg-black" />
      </div>
      <div className="mt-1 h-[182px] w-2 rounded-full bg-[#7a7e7e]" />
    </div>
  );
}

function HorizontalScroll() {
  return (
    <div className="flex h-4 shrink-0 items-center pr-4">
      <div className="ml-[3px] h-2 w-[532px] rounded-full bg-[#7a7e7e]" />
      <div className="ml-auto flex h-full w-[5px] items-center justify-center bg-[#a9a9a7]">
        <div className="h-2 w-px bg-black" />
      </div>
    </div>
  );
}

function NavArrow({ label, d }) {
  return (
    <button type="button" aria-label={label} className="flex h-4 w-[17px] items-center justify-center">
      <svg width="9" height="9" viewBox="0 0 9 9" fill="#a2a2a0" aria-hidden="true"><path d={d} /></svg>
    </button>
  );
}

function TabBar() {
  return (
    <div className="flex h-[17px] shrink-0 items-start pl-1.5">
      <NavArrow label="First sheet" d="M1 0h1v9H1zM8 0v9L3 4.500z" />
      <NavArrow label="Previous sheet" d="M7 0v9L2 4.500z" />
      <NavArrow label="Next sheet" d="M2 0v9l5-4.500z" />
      <NavArrow label="Last sheet" d="M7 0h1v9H7zM1 0v9l5-4.500z" />
      <button type="button" aria-label="Add sheet" className="ml-1.5 flex h-4 w-4 items-center justify-center">
        <svg width="9" height="9" viewBox="0 0 9 9" aria-hidden="true"><path d="M4.500 0v9M0 4.500h9" stroke="#1f2527" strokeWidth="3" /></svg>
      </button>
      <button type="button" className="ml-[7px] h-[17px] w-[73px] border border-t-0 border-[#858583] bg-white text-center leading-4 font-bold">Sheet1</button>
    </div>
  );
}

function Sidebar() {
  const items = [["Styles", StylesIcon], ["Gallery", GalleryIcon], ["Navigator", NavigatorIcon], ["Functions", FxIcon]];
  return (
    <aside className="mb-px flex shrink-0 border-y border-[#a5a5a3]">
      <div className="flex w-[7px] flex-col justify-center border-x border-[#a5a5a3] bg-linear-to-r from-white from-30% to-[#e8e8e6] to-30%">
        <button type="button" aria-label="Hide sidebar" className="-mx-px flex h-[73px] items-center justify-center bg-[#7e7e7c]">
          <svg width="5" height="8" viewBox="0 0 5 8" fill="#e8e8e6" aria-hidden="true"><path d="M0 0v8l5-4z" /></svg>
        </button>
      </div>
      <div className="flex w-10 flex-col items-center border-t border-l border-white pr-0.5">
        <button type="button" aria-label="Sidebar settings" className="flex h-9 w-8 shrink-0 items-center justify-center"><SidebarMenuIcon /></button>
        <div className="mt-px mb-[3px] h-px w-6 shrink-0 bg-[#cfcfcd]" />
        <div className="flex flex-col gap-[3px]">
          <button type="button" aria-label="Properties" className="flex h-8 w-8 items-center justify-center rounded border border-[#bcbcba]"><WrenchIcon /></button>
          {items.map(([name, Icon]) => (
            <button key={name} type="button" aria-label={name} className="flex h-8 w-8 items-center justify-center"><Icon /></button>
          ))}
        </div>
      </div>
    </aside>
  );
}

function StatusBar() {
  const cell = "flex h-[17px] shrink-0 items-center border-r border-[#2e3436] ";
  return (
    <footer className="flex h-[22px] shrink-0 items-center border-t border-[#a5a5a3]">
      <div className={cell + "w-60 pl-2.5"}>Sheet 1 of 1</div>
      <div className={cell + "w-[221px]"} />
      <div className={cell + "w-[206px] pl-2"}>Default</div>
      <div className={cell + "w-[68px]"} />
      <div className={cell + "w-[29px] justify-center"}>
        <svg width="13" height="11" viewBox="0 0 13 11" fill="none" aria-hidden="true"><path d="M0 3h9v6H0z" fill="#878785" /><path d="M9.500.5h3M9.500 10.500h3M11 .5v10" stroke="#878785" /></svg>
      </div>
      <div className={cell + "w-[29px] justify-center pl-0.5"}>
        <svg width="12" height="12" viewBox="0 0 12 12" fill="none" stroke="#8e8e8c" aria-hidden="true"><path d="M9.500 4V.5h-8v11h5l3-3M6.500 11.500V9" /><path d="M4.500 6l2 2 4.500-4" strokeWidth="1.500" /></svg>
      </div>
      <div className={cell + "w-[29px]"} />
      <div className={cell + "min-w-0 flex-1 justify-center"}>Sum=0</div>
      <div className={cell + "w-[143px] justify-center gap-1 pl-0.5"}>
        <button type="button" aria-label="Zoom out" className="flex h-4 w-3 items-center justify-center">
          <svg width="9" height="9" viewBox="0 0 9 9" aria-hidden="true"><path d="M0 4.500h9" stroke="#8a8a88" strokeWidth="2" /></svg>
        </button>
        <input type="range" aria-label="Zoom" min="0" max="100" defaultValue="50" className="h-4 w-[97px] appearance-none bg-[linear-gradient(#a8a8a6,#a8a8a6)] bg-[length:100%_2px] bg-center bg-no-repeat [&::-webkit-slider-thumb]:h-[9px] [&::-webkit-slider-thumb]:w-[9px] [&::-webkit-slider-thumb]:appearance-none [&::-webkit-slider-thumb]:rounded-full [&::-webkit-slider-thumb]:border [&::-webkit-slider-thumb]:border-[#777775] [&::-webkit-slider-thumb]:bg-white" />
        <button type="button" aria-label="Zoom in" className="flex h-4 w-3 items-center justify-center">
          <svg width="9" height="9" viewBox="0 0 9 9" aria-hidden="true"><path d="M0 4.500h9M4.500 0v9" stroke="#8a8a88" strokeWidth="2" /></svg>
        </button>
      </div>
      <div className="w-[52px] shrink-0 pl-[7px]">100%</div>
    </footer>
  );
}

export default function App() {
  return (
    <div className="relative h-screen overflow-hidden px-[9px] pt-2 pb-[9px] font-['DejaVu_Sans',sans-serif] text-xs text-[#2e3436]">
      <Wallpaper />
      <main className="relative flex h-full flex-col overflow-hidden rounded-t-[5px] border border-[#9b9b99] bg-[#e8e8e6]">
        <div className="shrink-0 bg-[linear-gradient(#ffffff,#e8e8e6_32px)]">
          <TitleBar />
          <MenuBar />
        </div>
        <StandardToolbar />
        <FormattingToolbar />
        <div className="flex min-h-0 flex-1">
          <section className="flex min-w-0 flex-1 flex-col">
            <FormulaBar />
            <div className="flex min-h-0 flex-1">
              <Sheet />
              <VerticalScroll />
            </div>
            <HorizontalScroll />
            <TabBar />
          </section>
          <Sidebar />
        </div>
        <StatusBar />
      </main>
    </div>
  );
}
